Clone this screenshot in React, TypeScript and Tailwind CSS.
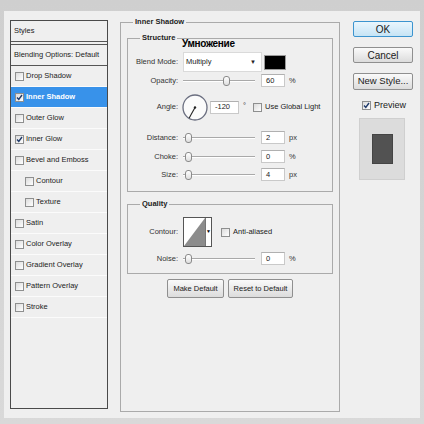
import React from "react";

const F = { fontFamily: '"Liberation Sans", Arial, sans-serif' };

function Check({ checked = false }: { checked?: boolean }) {
  return (
    <div className="w-[9px] h-[9px] shrink-0 border border-[#8e8f8f] bg-gradient-to-br from-[#dcdcdc] to-[#ffffff] flex items-center justify-center">
      {checked && (
        <svg width="7" height="7" viewBox="0 0 7 7">
          <path d="M1 3.5 L2.8 5.5 L6 1" stroke="#1f3a6b" strokeWidth="1.4" fill="none" />
        </svg>
      )}
    </div>
  );
}

function ListRow({
  label,
  checked = false,
  active = false,
  indent = false,
}: {
  label: string;
  checked?: boolean;
  active?: boolean;
  indent?: boolean;
}) {
  return (
    <div
      className={`h-[21px] border-b border-[#fbfbfb] flex items-center ${indent ? "pl-[14px]" : "pl-[4px]"} gap-[2px] ${
        active ? "bg-[#3892ea] text-white font-bold" : "text-[#222]"
      }`}
    >
      <Check checked={checked} />
      <span className="text-[7.5px] leading-none">{label}</span>
    </div>
  );
}

function Slider({ pos }: { pos: number }) {
  return (
    <div className="relative w-[72px] h-[12px] flex items-center">
      <div className="w-full h-[2px] border-t border-[#a9a9a9] border-b border-b-white" />
      <div
        className="absolute top-[1px] w-[7px] h-[10px] rounded-[3px] border border-[#8a8a8a] bg-gradient-to-b from-white to-[#dedede]"
        style={{ left: pos }}
      />
    </div>
  );
}

function Input({ value, w = 24 }: { value: string; w?: number }) {
  return (
    <div
      className="h-[13px] bg-white border border-[#c9c9c9] border-t-[#b0b0b0] flex items-center pl-[4px] text-[7.5px] text-[#222]"
      style={{ width: w }}
    >
      {value}
    </div>
  );
}

function SliderRow({
  label,
  pos,
  value,
  unit,
  mt,
}: {
  label: string;
  pos: number;
  value: string;
  unit: string;
  mt: string;
}) {
  return (
    <div className={`flex items-center h-[13px] ${mt}`}>
      <div className="w-[50px] text-right text-[7.5px] text-[#333]">{label}</div>
      <div className="ml-[5px]">
        <Slider pos={pos} />
      </div>
      <div className="ml-[6px]">
        <Input value={value} />
      </div>
      <div className="ml-[4px] text-[7.5px] text-[#333]">{unit}</div>
    </div>
  );
}

function Btn({ children, w, h, primary = false, cls = "" }: { children: React.ReactNode; w: number; h: number; primary?: boolean; cls?: string }) {
  return (
    <div
      className={`flex items-center justify-center rounded-[2px] border ${
        primary
          ? "border-[#3c94cf] bg-gradient-to-b from-[#eaf6fd] to-[#c6e4f5]"
          : "border-[#8f8f8f] bg-gradient-to-b from-[#fafafa] to-[#dcdcdc]"
      } text-[#1a1a1a] ${cls}`}
      style={{ width: w, height: h }}
    >
      {children}
    </div>
  );
}

export default function App() {
  return (
    <div style={F} className="w-[424px] h-[424px] bg-gradient-to-b from-[#cfcfcf] to-[#d9d9d9] pt-[11px] px-[4px] overflow-hidden">
      <div className="h-[407px] bg-[#efefef] flex items-start">
        {/* Left list */}
        <div className="ml-[6px] mt-[9px] w-[98px] h-[389px] border border-[#4a4a4a] bg-[#efefef]">
          <div className="h-[20px] flex items-center pl-[3px] text-[7.5px] text-[#222]">Styles</div>
          <div className="h-[4px] border-y border-[#555]" />
          <div className="h-[21px] border-b border-[#555] flex items-center pl-[3px] text-[7.5px] text-[#222]">
            Blending Options: Default
          </div>
          <ListRow label="Drop Shadow" />
          <ListRow label="Inner Shadow" checked active />
          <ListRow label="Outer Glow" />
          <ListRow label="Inner Glow" checked />
          <ListRow label="Bevel and Emboss" />
          <ListRow label="Contour" indent />
          <ListRow label="Texture" indent />
          <ListRow label="Satin" />
          <ListRow label="Color Overlay" />
          <ListRow label="Gradient Overlay" />
          <ListRow label="Pattern Overlay" />
          <ListRow label="Stroke" />
        </div>

        {/* Middle */}
        <div className="relative ml-[12px] mt-[11px] w-[220px] h-[390px] border border-[#aaaaaa]">
          <span className="absolute -top-[6px] left-[12px] bg-[#efefef] px-[2px] text-[7.5px] leading-[10px] font-bold text-[#222]">
            Inner Shadow
          </span>

          {/* Structure */}
          <div className="relative ml-[6px] mt-[15px] w-[206px] h-[154px] border border-[#aaaaaa]">
            <span className="absolute -top-[6px] left-[12px] bg-[#efefef] px-[2px] text-[7.5px] leading-[10px] font-bold text-[#222]">
              Structure
            </span>
            <span className="absolute top-[0px] left-[54px] text-[10px] leading-[10px] font-bold text-black tracking-[-0.3px]">
              Умножение
            </span>

            {/* Blend mode */}
            <div className="flex items-center h-[20px] mt-[13px]">
              <div className="w-[50px] text-right text-[7.5px] text-[#333]">Blend Mode:</div>
              <div className="ml-[5px] w-[79px] h-[20px] bg-white border border-[#dadada] flex items-center justify-between pl-[2px] pr-[5px] text-[7.5px] text-[#222]">
                <span>Multiply</span>
                <span className="text-[6px]">▼</span>
              </div>
              <div className="ml-[2px] w-[22px] h-[15px] bg-black border border-[#9a9a9a]" />
            </div>

            <SliderRow label="Opacity:" pos={40} value="60" unit="%" mt="mt-[2px]" />

            {/* Angle */}
            <div className="flex items-center h-[26px] mt-[7px]">
              <div className="w-[50px] text-right text-[7.5px] text-[#333]">Angle:</div>
              <svg className="ml-[4px]" width="26" height="27" viewBox="0 0 26 27">
                <ellipse cx="13" cy="13.5" rx="12" ry="12.5" fill="#fbfbfb" stroke="#6b6f80" strokeWidth="1.3" />
                <line x1="13" y1="13.5" x2="7.2" y2="24" stroke="#222" strokeWidth="1.1" />
                <circle cx="13" cy="13.5" r="1.2" fill="#222" />
              </svg>
              <div className="ml-[2px]">
                <Input value="-120" w={29} />
              </div>
              <div className="ml-[4px] self-start mt-[6px] text-[7.5px] text-[#333]">°</div>
              <div className="ml-[7px] flex items-center gap-[3px]">
                <Check />
                <span className="text-[7.5px] text-[#222]">Use Global Light</span>
              </div>
            </div>

            <SliderRow label="Distance:" pos={2} value="2" unit="px" mt="mt-[11px]" />
            <SliderRow label="Choke:" pos={2} value="0" unit="%" mt="mt-[6px]" />
            <SliderRow label="Size:" pos={2} value="4" unit="px" mt="mt-[5px]" />
          </div>

          {/* Quality */}
          <div className="relative ml-[6px] mt-[12px] w-[206px] h-[70px] border border-[#aaaaaa]">
            <span className="absolute -top-[6px] left-[12px] bg-[#efefef] px-[2px] text-[7.5px] leading-[10px] font-bold text-[#222]">
              Quality
            </span>
            <div className="flex items-center h-[30px] mt-[12px]">
              <div className="w-[50px] text-right text-[7.5px] text-[#333]">Contour:</div>
              <div className="ml-[5px] w-[29px] h-[30px] border border-[#555] bg-white flex">
                <svg width="21" height="28" viewBox="0 0 21 28">
                  <polygon points="0,28 21,0 21,28" fill="#8c8c8c" />
                </svg>
                <div className="flex-1 border-l border-[#777] flex items-center justify-center text-[5px] text-black">▼</div>
              </div>
              <div className="ml-[9px] flex items-center gap-[3px]">
                <Check />
                <span className="text-[7.5px] text-[#222]">Anti-aliased</span>
              </div>
            </div>
            <SliderRow label="Noise:" pos={2} value="0" unit="%" mt="mt-[5px]" />
          </div>

          {/* Buttons */}
          <div className="flex mt-[5px] ml-[46px] gap-[4px]">
            <Btn w={57} h={19} cls="text-[7.5px]">Make Default</Btn>
            <Btn w={65} h={19} cls="text-[7.5px]">Reset to Default</Btn>
          </div>
        </div>

        {/* Right column */}
        <div className="ml-[13px] mt-[10px] w-[60px] flex flex-col">
          <Btn w={60} h={16} primary cls="text-[10px]">OK</Btn>
          <Btn w={60} h={16} cls="text-[10px] mt-[10px]">Cancel</Btn>
          <Btn w={60} h={17} cls="text-[9.5px] mt-[10px]">New Style...</Btn>
          <div className="mt-[10px] ml-[9px] flex items-center gap-[3px] h-[11px]">
            <Check checked />
            <span className="text-[9px] text-[#1a1a1a]">Preview</span>
          </div>
          <div className="mt-[7px] ml-[6px] w-[46px] h-[62px] bg-[#dcdcdc] border border-[#cfcfcf] flex items-center justify-center">
            <div className="w-[21px] h-[30px] bg-[#525252] border border-[#444]" />
          </div>
        </div>
      </div>
    </div>
  );
}
